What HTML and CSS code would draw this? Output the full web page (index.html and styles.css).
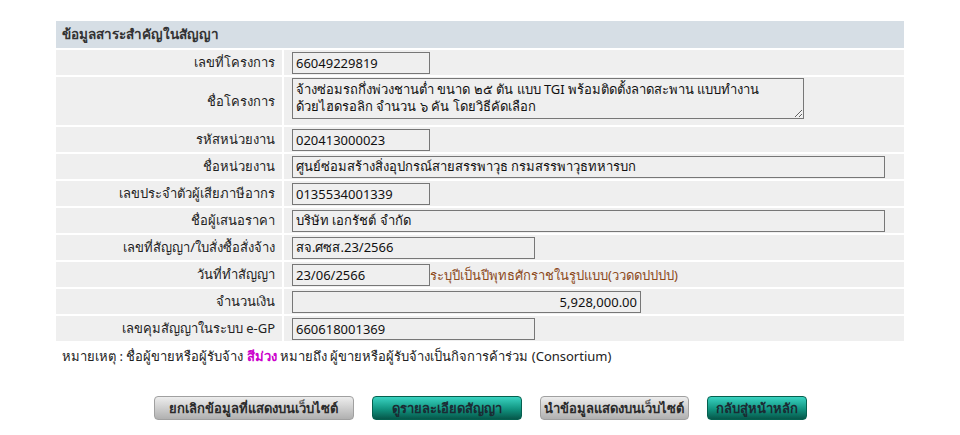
FILE: index.html
```html
<!DOCTYPE html>
<html lang="th">
<head>
    <meta charset="UTF-8">
    <title>ข้อมูลสาระสำคัญในสัญญา</title>
    <link rel="stylesheet" href="styles.css">
</head>
<body>
    <div class="page">
        <table class="info_table">
            <tr>
                <th colspan="2" class="table_head">ข้อมูลสาระสำคัญในสัญญา</th>
            </tr>
            <tr>
                <td class="label">เลขที่โครงการ</td>
                <td class="value"><input class="field w_s" type="text" value="66049229819" readonly></td>
            </tr>
            <tr>
                <td class="label">ชื่อโครงการ</td>
                <td class="value"><textarea class="field area" readonly>จ้างซ่อมรถกึ่งพ่วงชานต่ำ ขนาด ๒๕ ตัน แบบ TGI พร้อมติดตั้งลาดสะพาน แบบทำงาน
ด้วยไฮดรอลิก จำนวน ๖ คัน โดยวิธีคัดเลือก</textarea></td>
            </tr>
            <tr>
                <td class="label">รหัสหน่วยงาน</td>
                <td class="value"><input class="field w_s" type="text" value="020413000023" readonly></td>
            </tr>
            <tr>
                <td class="label">ชื่อหน่วยงาน</td>
                <td class="value"><input class="field w_l" type="text" value="ศูนย์ซ่อมสร้างสิ่งอุปกรณ์สายสรรพาวุธ กรมสรรพาวุธทหารบก" readonly></td>
            </tr>
            <tr>
                <td class="label">เลขประจำตัวผู้เสียภาษีอากร</td>
                <td class="value"><input class="field w_s" type="text" value="0135534001339" readonly></td>
            </tr>
            <tr>
                <td class="label">ชื่อผู้เสนอราคา</td>
                <td class="value"><input class="field w_l" type="text" value="บริษัท เอกรัชต์ จำกัด" readonly></td>
            </tr>
            <tr>
                <td class="label">เลขที่สัญญา/ใบสั่งซื้อสั่งจ้าง</td>
                <td class="value"><input class="field w_m" type="text" value="สจ.ศซส.23/2566" readonly></td>
            </tr>
            <tr>
                <td class="label">วันที่ทำสัญญา</td>
                <td class="value"><input class="field w_s" type="text" value="23/06/2566" readonly><span class="hint">ระบุปีเป็นปีพุทธศักราชในรูปแบบ(ววดดปปปป)</span></td>
            </tr>
            <tr>
                <td class="label">จำนวนเงิน</td>
                <td class="value"><input class="field w_money" type="text" value="5,928,000.00" readonly></td>
            </tr>
            <tr>
                <td class="label">เลขคุมสัญญาในระบบ e-GP</td>
                <td class="value"><input class="field w_m" type="text" value="660618001369" readonly></td>
            </tr>
        </table>

        <p class="note">หมายเหตุ : ชื่อผู้ขายหรือผู้รับจ้าง <b class="purple">สีม่วง</b> หมายถึง ผู้ขายหรือผู้รับจ้างเป็นกิจการค้าร่วม (Consortium)</p>

        <div class="buttons">
            <button class="btn btn_gray b1">ยกเลิกข้อมูลที่แสดงบนเว็บไซต์</button>
            <button class="btn btn_green b2">ดูรายละเอียดสัญญา</button>
            <button class="btn btn_gray b3">นำข้อมูลแสดงบนเว็บไซต์</button>
            <button class="btn btn_green b4">กลับสู่หน้าหลัก</button>
        </div>
    </div>
</body>
</html>
```

FILE: styles.css
```css
*{
    box-sizing: border-box;
}
body{
    margin: 0;
    background: #fff;
    font-family: Tahoma, "Noto Sans", "DejaVu Sans", sans-serif;
    font-size: 13px;
    line-height: 17px;
    color: #222;
}
.page{
    width: 960px;
    padding-top: 19px;
}

.info_table{
    width: 852px;
    margin: 0 auto;
    border-spacing: 2px;
}

.info_table .table_head{
    background: #d6dee5;
    text-align: left;
    font-weight: bold;
    font-size: 13.5px;
    color: #333;
    height: 27px;
    padding: 0 6px;
}

.info_table td{
    background: #efefef;
    height: 25px;
    padding: 0;
}

.info_table .label{
    width: 226px;
    text-align: right;
    padding-right: 7px;
}

.info_table .value{
    padding-left: 8px;
}

.field{
    font-family: inherit;
    font-size: 13px;
    color: #111;
    background: #efefef;
    border: 1px solid #777;
    height: 22px;
    padding: 1px 3px;
    margin: 0;
    vertical-align: middle;
}

.w_s{ width: 138px; }
.w_m{ width: 243px; }
.w_l{ width: 593px; }
.w_money{
    width: 349px;
    text-align: right;
}

.area{
    display: block;
    width: 512px;
    height: 41px;
    margin: 1px 0 6px;
    resize: both;
    line-height: 17px;
    padding: 2px 3px;
    overflow: hidden;
}

.hint{
    color: #8c4a1c;
    vertical-align: middle;
}

.note{
    margin: 5px 0 0 62px;
}
.purple{
    color: #c0c;
}

.buttons{
    display: flex;
    justify-content: center;
    gap: 18px;
    margin-top: 31px;
}

.btn{
    font-family: inherit;
    font-size: 13px;
    font-weight: bold;
    color: #2a2a2a;
    height: 24px;
    padding: 0;
    border-radius: 4px;
    cursor: pointer;
}

.b1{ width: 200px; }
.b2{ width: 150px; }
.b3{ width: 149px; }
.b4{ width: 100px; }

.btn_gray{
    background: linear-gradient(#ededed, #b0b0b0);
    border: 1px solid #a0a0a0;
}

.btn_green{
    background: linear-gradient(#3ad3c1, #119480 55%, #06574a);
    border: 1px solid #05604f;
    color: #1b2b33;
}
```
